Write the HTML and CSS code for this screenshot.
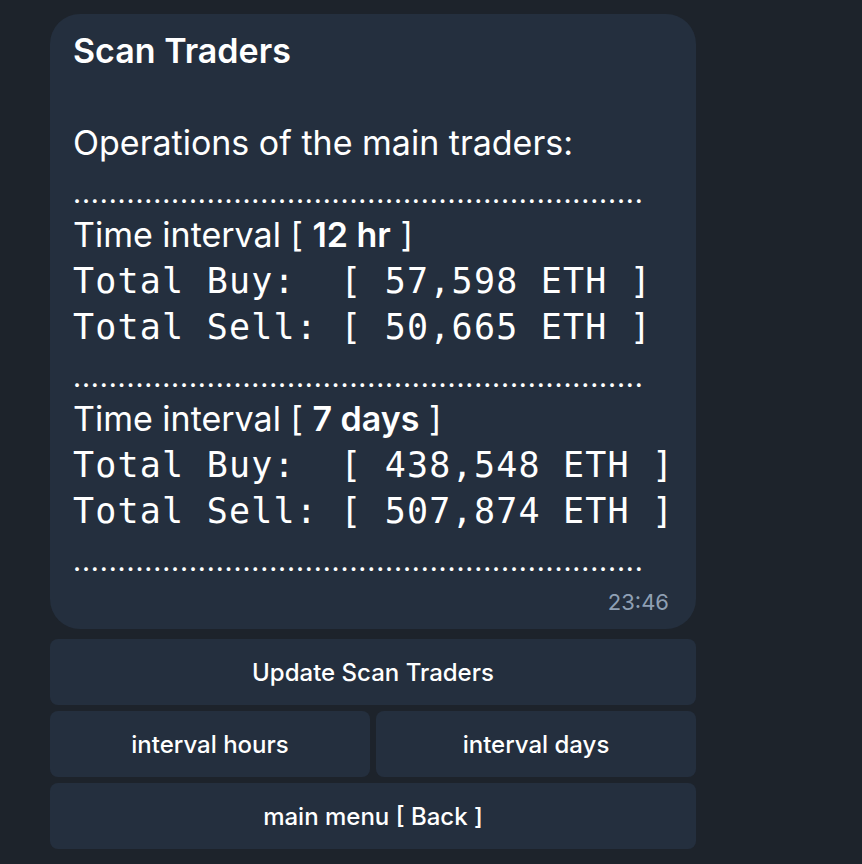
FILE: index.html
```html
<!DOCTYPE html>
<html>
<head>
<meta charset="utf-8">
<link rel="stylesheet" href="styles.css">
</head>
<body>
<div class="chat">
  <div class="bubble">
    <div class="line title">Scan Traders</div>
    <div class="line"></div>
    <div class="line">Operations of the main traders:</div>
    <div class="line dots">................................................................</div>
    <div class="line">Time interval [ <b>12 hr</b> ]</div>
    <div class="line mono">Total Buy:  [ 57,598 ETH ]</div>
    <div class="line mono">Total Sell: [ 50,665 ETH ]</div>
    <div class="line dots">................................................................</div>
    <div class="line">Time interval [ <b>7 days</b> ]</div>
    <div class="line mono">Total Buy:  [ 438,548 ETH ]</div>
    <div class="line mono">Total Sell: [ 507,874 ETH ]</div>
    <div class="line dots">................................................................</div>
    <div class="time">23:46</div>
  </div>
  <div class="keyboard">
    <div class="btn wide">Update Scan Traders</div>
    <div class="btn">interval hours</div>
    <div class="btn">interval days</div>
    <div class="btn wide">main menu [ Back ]</div>
  </div>
</div>
</body>
</html>
```
FILE: styles.css
```css
html, body {
  margin: 0;
  padding: 0;
  background: #1d232b;
  height: 100%;
}
body {
  font-family: Inter, "Noto Sans", sans-serif;
  color: #ffffff;
}
.chat {
  width: 646px;
  padding: 14px 0 0 50px;
}
.bubble {
  background: #242f3e;
  border-radius: 30px;
  padding: 14px 24px 15px 23px;
}
.line {
  height: 46px;
  line-height: 46px;
  font-size: 34px;
  white-space: pre;
}
.line b {
  font-weight: 600;
}
.title {
  font-weight: 600;
}
.dots {
  font-size: 28px;
  line-height: 54px;
  letter-spacing: 0.85px;
  overflow: hidden;
}
.mono {
  font-family: "DejaVu Sans Mono", monospace;
  font-size: 35px;
  letter-spacing: 1.2px;
}
.time {
  text-align: right;
  font-size: 22px;
  color: #8fa0b4;
  line-height: 24px;
  margin-top: 10px;
  margin-right: 3px;
}
.keyboard {
  display: grid;
  grid-template-columns: 1fr 1fr;
  gap: 6px;
  margin-top: 10px;
}
.btn {
  background: #242f3e;
  border-radius: 8px;
  height: 66px;
  display: flex;
  align-items: center;
  justify-content: center;
  font-size: 24px;
  font-weight: 500;
}
.btn.wide {
  grid-column: 1 / 3;
}
```
